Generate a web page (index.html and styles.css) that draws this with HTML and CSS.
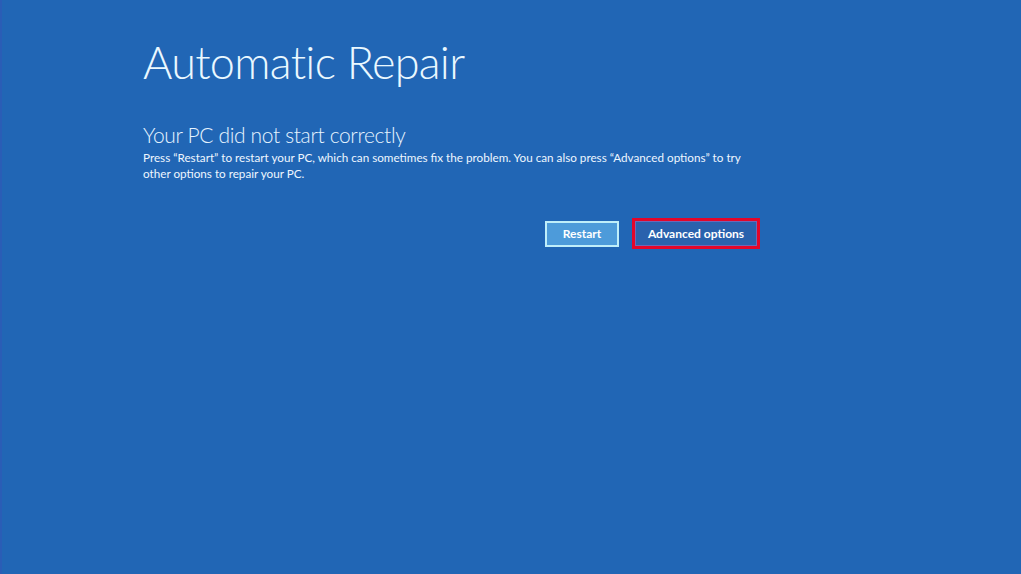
FILE: index.html
```html
<!DOCTYPE html>
<html lang="en">
<head>
<meta charset="utf-8">
<title>Automatic Repair</title>
<link rel="stylesheet" href="styles.css">
</head>
<body>
<main class="screen">
  <section class="panel">
    <h1 class="title">Automatic Repair</h1>
    <h2 class="subtitle">Your PC did not start correctly</h2>
    <p class="message">Press “Restart” to restart your PC, which can sometimes fix the problem. You can also press “Advanced options” to try other options to repair your PC.</p>
    <div class="actions">
      <button class="btn btn-restart">Restart</button>
      <span class="highlight"><button class="btn btn-advanced">Advanced options</button></span>
    </div>
  </section>
</main>
</body>
</html>
```

FILE: styles.css
```css
html, body {
  margin: 0;
  padding: 0;
  height: 100%;
}
body {
  background: #2166b5;
  font-family: "Lato", "Open Sans", sans-serif;
  color: #ffffff;
  overflow: hidden;
}
.screen {
  height: 100%;
  box-sizing: border-box;
  border-left: 2px solid #2a5db6;
  padding: 30px 0 0 141px;
}
.panel {
  width: 617px;
}
.title {
  margin: 0;
  font-size: 45px;
  font-weight: 300;
  letter-spacing: -0.7px;
  line-height: 64px;
  color: #eaf8ff;
}
.subtitle {
  margin: 27px 0 0 0;
  font-size: 21px;
  font-weight: 300;
  letter-spacing: -0.35px;
  line-height: 28px;
  color: #e6f4ff;
}
.message {
  margin: 1px 0 0 0;
  font-size: 11.7px;
  line-height: 15.5px;
  color: #eef6ff;
  width: 605px;
}
.actions {
  display: flex;
  justify-content: flex-end;
  align-items: center;
  gap: 13px;
  margin-top: 37px;
}
.btn {
  font-family: "Lato", "Open Sans", sans-serif;
  font-weight: 700;
  font-size: 12px;
  color: #ffffff;
  cursor: default;
}
.btn-restart {
  width: 74px;
  height: 26px;
  background: #4d9bda;
  border: 2px solid #bfeefa;
  padding: 0;
}
.highlight {
  display: inline-flex;
  border: 3px solid #e3062a;
}
.btn-advanced {
  width: 122px;
  height: 25px;
  background: #2a62ad;
  border: 1px solid #6f68b6;
  padding: 0;
}
```
